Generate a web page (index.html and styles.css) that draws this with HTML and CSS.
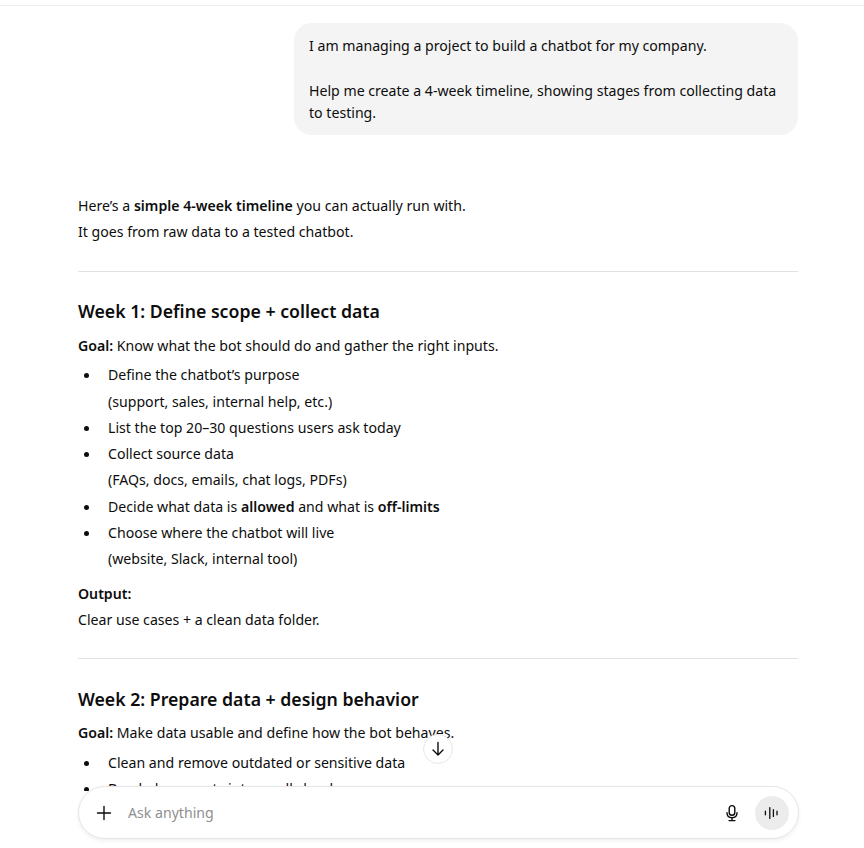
FILE: index.html
```html
<!DOCTYPE html>
<html lang="en">
<head>
<meta charset="utf-8">
<title>Chat</title>
<link rel="stylesheet" href="styles.css">
</head>
<body>
<div class="page">
  <div class="topline"></div>
  <main class="thread">
    <div class="user-row">
      <div class="bubble">
        <p>I am managing a project to build a chatbot for my company.</p>
        <p class="blank">&nbsp;</p>
        <p>Help me create a 4-week timeline, showing stages from collecting data to testing.</p>
      </div>
    </div>
    <article class="answer">
      <p>Here’s a <strong>simple 4-week timeline</strong> you can actually run with.<br>It goes from raw data to a tested chatbot.</p>
      <hr>
      <h3>Week 1: Define scope + collect data</h3>
      <p class="goal"><strong>Goal:</strong> Know what the bot should do and gather the right inputs.</p>
      <ul>
        <li>Define the chatbot’s purpose<br>(support, sales, internal help, etc.)</li>
        <li>List the top 20–30 questions users ask today</li>
        <li>Collect source data<br>(FAQs, docs, emails, chat logs, PDFs)</li>
        <li>Decide what data is <strong>allowed</strong> and what is <strong>off-limits</strong></li>
        <li>Choose where the chatbot will live<br>(website, Slack, internal tool)</li>
      </ul>
      <p><strong>Output:</strong><br>Clear use cases + a clean data folder.</p>
      <hr>
      <h3 class="week-two">Week 2: Prepare data + design behavior</h3>
      <p class="goal"><strong>Goal:</strong> Make data usable and define how the bot behaves.</p>
      <ul>
        <li>Clean and remove outdated or sensitive data</li>
        <li>Break documents into small chunks</li>
      </ul>
    </article>
  </main>
  <button class="scroll-down" type="button" aria-label="Scroll to bottom">
    <svg width="20" height="20" viewBox="0 0 20 20" fill="none" stroke="currentColor" stroke-width="1.4" stroke-linecap="round" stroke-linejoin="round"><path d="M10 3.5v12.5M5 11l5 5 5-5"/></svg>
  </button>
  <div class="composer-zone">
    <div class="composer">
      <svg class="plus" width="20" height="20" viewBox="0 0 20 20" fill="none" stroke="currentColor" stroke-width="1.4" stroke-linecap="round"><path d="M10 3.5v13M3.5 10h13"/></svg>
      <span class="placeholder">Ask anything</span>
      <svg class="mic" width="20" height="20" viewBox="0 0 20 20" fill="none" stroke="currentColor" stroke-width="1.4" stroke-linecap="round" stroke-linejoin="round"><rect x="7.2" y="2.6" width="5.6" height="9.6" rx="2.8"/><path d="M5 9.8c0 3 2.1 5 5 5s5-2 5-5M10 14.8v2.6M7 17.6h6"/></svg>
      <span class="voice">
        <svg width="20" height="20" viewBox="0 0 20 20" fill="none" stroke="currentColor" stroke-width="1.3" stroke-linecap="round"><path d="M3.4 8.2v3.6M7.8 4.6v10.8M11.4 6.6v6.8M15 8.2v3.6"/></svg>
      </span>
    </div>
  </div>
</div>
</body>
</html>
```

FILE: styles.css
```css
* { box-sizing: border-box; }
html, body { margin: 0; height: 100%; background: #fff; }
.page {
  position: relative;
  height: 848px;
  overflow: hidden;
  font-family: "Noto Sans", "Open Sans", sans-serif;
  font-size: 14.13px;
  line-height: 26.25px;
  color: #0d0d0d;
}
.topline { height: 6px; border-bottom: 1px solid #f0f0f0; }
.thread { width: 720px; margin-left: 78px; padding-top: 17px; }
.user-row { display: flex; justify-content: flex-end; margin-bottom: 57.4px; }
.bubble {
  width: 504px;
  padding: 12px 15px 10px;
  background: #f4f4f4;
  border-radius: 18px;
  line-height: 22.4px;
}
.bubble p { margin: 0; }
.answer p { margin: 0; }
.answer > p:first-child { padding-top: 1px; }
.answer strong { font-weight: 600; }
.answer hr { border: 0; border-top: 1px solid #e1e1e1; margin: 25px 0 26px; }
.answer h3 { margin: 0 0 9px; font-size: 17.7px; font-weight: 600; line-height: 26px; }
.answer h3.week-two { padding-top: 1px; margin-bottom: 8px; }
.answer ul { margin: 3.5px 0 8.5px; padding: 0 0 0 30px; list-style: none; }
.answer li { position: relative; margin: 0; padding: 0; }
.answer li::before {
  content: "";
  position: absolute;
  left: -24px;
  top: 11px;
  width: 5px;
  height: 5px;
  border-radius: 50%;
  background: #0d0d0d;
}
.scroll-down {
  position: absolute;
  left: 423px;
  top: 734px;
  width: 30px;
  height: 30px;
  padding: 0;
  display: flex;
  align-items: center;
  justify-content: center;
  border: 1px solid #e6e6e6;
  border-radius: 50%;
  background: #fff;
  color: #0d0d0d;
}
.composer-zone {
  position: absolute;
  left: 0;
  right: 0;
  top: 786px;
  bottom: 0;
  background: linear-gradient(transparent 5px, #fff 5px);
}
.composer {
  margin-left: 77.5px;
  width: 721px;
  height: 53px;
  display: flex;
  align-items: center;
  padding: 0 9px 0 15.5px;
  border: 1px solid #e5e5e5;
  border-radius: 27px;
  background: #fff;
  box-shadow: 0 2px 4px rgba(0,0,0,.06);
}
.plus { flex: none; }
.placeholder { flex: 1; margin-left: 14px; padding-top: 2px; color: #8f8f8f; }
.mic { flex: none; margin-right: 13px; }
.voice {
  flex: none;
  width: 34px;
  height: 34px;
  display: flex;
  align-items: center;
  justify-content: center;
  border-radius: 50%;
  background: #ececec;
}
```
